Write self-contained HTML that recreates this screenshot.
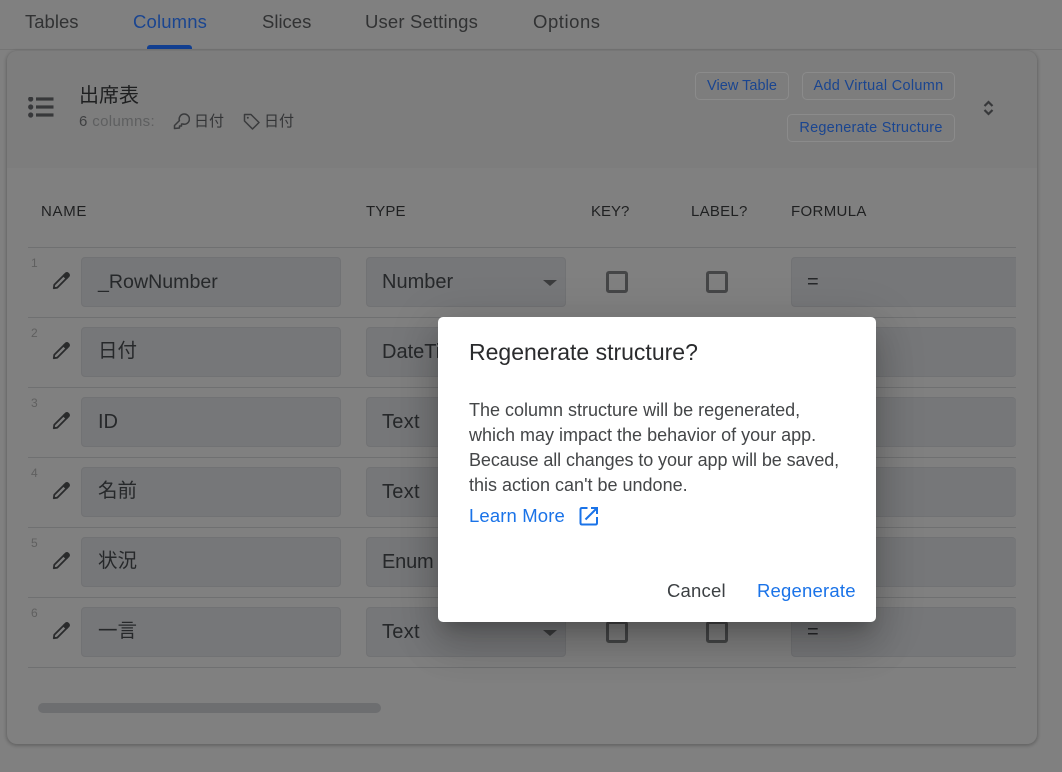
<!DOCTYPE html>
<html><head><meta charset="utf-8">
<style>
*{box-sizing:border-box}
html,body{margin:0;padding:0}
body{width:1062px;height:772px;overflow:hidden;position:relative;background:#808080;font-family:"Liberation Sans","Noto Sans CJK JP",sans-serif;color:#252627}
.t{position:absolute;white-space:nowrap}
.tab{font-size:18.500px;top:12px;line-height:20px;color:#313233}
.head{font-size:15px;top:203px;line-height:18px;color:#1f2021}
.btn{position:absolute;height:28px;border:1px solid #8b8b8b;border-radius:5px;font-size:14.500px;line-height:26px;color:#1a4590;text-align:center;white-space:nowrap;letter-spacing:.25px}
.line{position:absolute;left:28px;width:988px;height:1px;background:#6f7071}
.f{position:absolute;height:50px;background:#767779;border:1px solid #717274;border-radius:4px;font-size:20px;line-height:48px;color:#26282a;white-space:nowrap;overflow:hidden}
.cj{font-size:19.500px;line-height:46px}
.num{position:absolute;left:31px;font-size:12px;line-height:13px;color:#5f5f5f}
.cb{position:absolute;width:22px;height:22px;border:3px solid #454647;border-radius:3px}
.pen{position:absolute;left:52px;width:18px;height:18px}
.arr{position:absolute;left:543px;width:0;height:0;border-left:7px solid transparent;border-right:7px solid transparent;border-top:6px solid #3c3d3e}
#card{position:absolute;left:7px;top:51px;width:1030px;height:693px;background:#808080;border-radius:10px;box-shadow:0 1px 3px 1px rgba(0,0,0,.22)}
#hdr{position:absolute;left:7px;top:51px;width:1030px;height:117px;background:#7d7d7d;border-radius:10px 10px 0 0}
#dlg{position:absolute;left:438px;top:317px;width:438px;height:305px;background:#fff;border-radius:5px;box-shadow:0 11px 15px -7px rgba(0,0,0,.2),0 24px 38px 3px rgba(0,0,0,.14),0 9px 46px 8px rgba(0,0,0,.12)}
.b{font-size:18px;line-height:25px;color:#444648;left:31px}
.act{font-size:18.500px;line-height:24px;letter-spacing:.2px}
</style></head><body>
<div style="position:absolute;left:0;top:49px;width:1062px;height:1px;background:#757575"></div>
<div class="t tab" style="left:25px">Tables</div>
<div class="t tab" style="left:133px;color:#1a4590;letter-spacing:.15px">Columns</div>
<div style="position:absolute;left:147px;top:45px;width:45px;height:4px;background:#123f90;border-radius:3px 3px 0 0"></div>
<div class="t tab" style="left:262px">Slices</div>
<div class="t tab" style="left:365px;letter-spacing:.15px">User Settings</div>
<div class="t tab" style="left:533px;letter-spacing:.55px">Options</div>

<div id="card"></div><div id="hdr"></div>

<svg style="position:absolute;left:28px;top:97px" width="26" height="22" viewBox="0 0 26 22"><g fill="#37383a"><circle cx="2.700" cy="2" r="2.600"/><circle cx="2.700" cy="10" r="2.600"/><circle cx="2.700" cy="18" r="2.600"/><rect x="8" y=".4" width="17.500" height="3.200"/><rect x="8" y="8.400" width="17.500" height="3.200"/><rect x="8" y="16.400" width="17.500" height="3.200"/></g></svg>
<div class="t" style="left:79px;top:84px;font-size:20px;line-height:24px;color:#1e1f20">出席表</div>
<div class="t" style="left:79px;top:113px;font-size:15px;line-height:18px;color:#5e5f60;letter-spacing:.35px"><span style="color:#3f4042">6</span> columns:</div>
<svg style="position:absolute;left:173px;top:113px" width="17" height="17" viewBox="0 0 17 17" fill="none" stroke="#3a3b3d" stroke-width="1.500"><path d="M1.500 15.500 L1.500 12.500 L6.400 7.600 A5.100 5.100 0 1 1 9.800 11 L8.500 11 L8.500 13 L6.500 13 L6.500 15 Z" stroke-linejoin="round"/></svg>
<div class="t" style="left:194px;top:112px;font-size:15px;line-height:20px;color:#343537">日付</div>
<svg style="position:absolute;left:243px;top:113px" width="17" height="17" viewBox="0 0 17 17" fill="none" stroke="#3a3b3d" stroke-width="1.500"><path d="M1.500 1.500 H8 L16 9.500 L9.500 16 L1.500 8 Z" stroke-linejoin="round"/><circle cx="4.800" cy="4.800" r="1" fill="#3a3b3d" stroke="none"/></svg>
<div class="t" style="left:264px;top:112px;font-size:15px;line-height:20px;color:#343537">日付</div>

<div class="btn" style="left:695px;top:72px;width:94px;letter-spacing:.03px">View Table</div>
<div class="btn" style="left:802px;top:72px;width:153px;letter-spacing:.3px">Add Virtual Column</div>
<div class="btn" style="left:787px;top:114px;width:168px;letter-spacing:.23px">Regenerate Structure</div>
<svg style="position:absolute;left:982px;top:100px" width="13" height="16" viewBox="0 0 13 16" fill="none" stroke="#37383a" stroke-width="2.200"><path d="M2.500 6 L6.500 2 L10.500 6"/><path d="M2.500 10 L6.500 14 L10.500 10"/></svg>

<div class="t head" style="left:41px;letter-spacing:.7px">NAME</div>
<div class="t head" style="left:366px;letter-spacing:.1px">TYPE</div>
<div class="t head" style="left:591px">KEY?</div>
<div class="t head" style="left:691px;letter-spacing:.25px">LABEL?</div>
<div class="t head" style="left:791px;letter-spacing:.35px">FORMULA</div>

<div class="line" style="top:247px"></div>
<div class="line" style="top:317px"></div>
<div class="line" style="top:387px"></div>
<div class="line" style="top:457px"></div>
<div class="line" style="top:527px"></div>
<div class="line" style="top:597px"></div>
<div class="line" style="top:667px"></div>

<!-- row 1 -->
<div class="num" style="top:257px">1</div>
<svg class="pen" style="top:272px" viewBox="0 0 18 18" fill="none" stroke="#2a2b2c" stroke-width="1.800" stroke-linejoin="round"><path d="M1.800 16.200 L2.300 12.800 L11.500 3.600 L14.400 6.500 L5.200 15.700 Z"/><path d="M12 3 L14 1.200 Q15 .6 16 1.400 L16.600 2 Q17.400 3 16.800 4 L15 6 Z" fill="#2a2b2c"/></svg>
<div class="f" style="left:81px;top:257px;width:260px;padding-left:16px;font-size:19.600px">_RowNumber</div>
<div class="f" style="left:366px;top:257px;width:200px;padding-left:15px">Number</div>
<div class="arr" style="top:280px"></div>
<div class="cb" style="left:606px;top:271px"></div>
<div class="cb" style="left:706px;top:271px"></div>
<div class="f" style="left:791px;top:257px;width:225px;padding-left:15px;border-radius:4px 0 0 4px;border-right:0">=</div>

<!-- row 2 -->
<div class="num" style="top:327px">2</div>
<svg class="pen" style="top:342px" viewBox="0 0 18 18" fill="none" stroke="#2a2b2c" stroke-width="1.800" stroke-linejoin="round"><path d="M1.800 16.200 L2.300 12.800 L11.500 3.600 L14.400 6.500 L5.200 15.700 Z"/><path d="M12 3 L14 1.200 Q15 .6 16 1.400 L16.600 2 Q17.400 3 16.800 4 L15 6 Z" fill="#2a2b2c"/></svg>
<div class="f cj" style="left:81px;top:327px;width:260px;padding-left:16px">日付</div>
<div class="f" style="left:366px;top:327px;width:200px;padding-left:15px">DateTime</div>
<div class="f" style="left:791px;top:327px;width:225px;border-right:0"></div>

<!-- row 3 -->
<div class="num" style="top:397px">3</div>
<svg class="pen" style="top:412px" viewBox="0 0 18 18" fill="none" stroke="#2a2b2c" stroke-width="1.800" stroke-linejoin="round"><path d="M1.800 16.200 L2.300 12.800 L11.500 3.600 L14.400 6.500 L5.200 15.700 Z"/><path d="M12 3 L14 1.200 Q15 .6 16 1.400 L16.600 2 Q17.400 3 16.800 4 L15 6 Z" fill="#2a2b2c"/></svg>
<div class="f" style="left:81px;top:397px;width:260px;padding-left:16px">ID</div>
<div class="f" style="left:366px;top:397px;width:200px;padding-left:15px;letter-spacing:.3px">Text</div>
<div class="f" style="left:791px;top:397px;width:225px;border-right:0"></div>

<!-- row 4 -->
<div class="num" style="top:467px">4</div>
<svg class="pen" style="top:482px" viewBox="0 0 18 18" fill="none" stroke="#2a2b2c" stroke-width="1.800" stroke-linejoin="round"><path d="M1.800 16.200 L2.300 12.800 L11.500 3.600 L14.400 6.500 L5.200 15.700 Z"/><path d="M12 3 L14 1.200 Q15 .6 16 1.400 L16.600 2 Q17.400 3 16.800 4 L15 6 Z" fill="#2a2b2c"/></svg>
<div class="f cj" style="left:81px;top:467px;width:260px;padding-left:16px">名前</div>
<div class="f" style="left:366px;top:467px;width:200px;padding-left:15px;letter-spacing:.3px">Text</div>
<div class="f" style="left:791px;top:467px;width:225px;border-right:0"></div>

<!-- row 5 -->
<div class="num" style="top:537px">5</div>
<svg class="pen" style="top:552px" viewBox="0 0 18 18" fill="none" stroke="#2a2b2c" stroke-width="1.800" stroke-linejoin="round"><path d="M1.800 16.200 L2.300 12.800 L11.500 3.600 L14.400 6.500 L5.200 15.700 Z"/><path d="M12 3 L14 1.200 Q15 .6 16 1.400 L16.600 2 Q17.400 3 16.800 4 L15 6 Z" fill="#2a2b2c"/></svg>
<div class="f cj" style="left:81px;top:537px;width:260px;padding-left:16px">状況</div>
<div class="f" style="left:366px;top:537px;width:200px;padding-left:15px;letter-spacing:-.2px">Enum</div>
<div class="f" style="left:791px;top:537px;width:225px;border-right:0"></div>

<!-- row 6 -->
<div class="num" style="top:607px">6</div>
<svg class="pen" style="top:622px" viewBox="0 0 18 18" fill="none" stroke="#2a2b2c" stroke-width="1.800" stroke-linejoin="round"><path d="M1.800 16.200 L2.300 12.800 L11.500 3.600 L14.400 6.500 L5.200 15.700 Z"/><path d="M12 3 L14 1.200 Q15 .6 16 1.400 L16.600 2 Q17.400 3 16.800 4 L15 6 Z" fill="#2a2b2c"/></svg>
<div class="f cj" style="left:81px;top:607px;width:260px;padding-left:16px">一言</div>
<div class="f" style="left:366px;top:607px;width:200px;padding-left:15px;letter-spacing:.3px">Text</div>
<div class="arr" style="top:630px"></div>
<div class="cb" style="left:606px;top:621px"></div>
<div class="cb" style="left:706px;top:621px"></div>
<div class="f" style="left:791px;top:607px;width:225px;padding-left:15px;border-right:0">=</div>

<div style="position:absolute;left:38px;top:703px;width:343px;height:10px;background:#6d6e70;border-radius:5px"></div>

<div id="dlg">
<div class="t" style="left:31px;top:21px;font-size:23px;line-height:28px;color:#2a2b2d">Regenerate structure?</div>
<div class="t b" style="top:81px">The column structure will be regenerated,</div>
<div class="t b" style="top:106px">which may impact the behavior of your app.</div>
<div class="t b" style="top:131px;letter-spacing:-.09px">Because all changes to your app will be saved,</div>
<div class="t b" style="top:156px">this action can't be undone.</div>
<div class="t act" style="left:31px;top:187px;color:#1a73e8;letter-spacing:.13px">Learn More</div>
<svg style="position:absolute;left:141px;top:189px" width="20" height="20" viewBox="0 0 20 20" fill="none" stroke="#1a73e8" stroke-width="2"><path d="M8.500 2 H3 Q1.500 2 1.500 3.500 V17 Q1.500 18.500 3 18.500 H16.500 Q18 18.500 18 17 V11"/><path d="M12 2 H18 V8"/><path d="M17.500 2.500 L6.500 13.500"/></svg>
<div class="t act" style="left:229px;top:262px;color:#3c4043">Cancel</div>
<div class="t act" style="left:319px;top:262px;color:#1a73e8">Regenerate</div>
</div>
</body></html>
